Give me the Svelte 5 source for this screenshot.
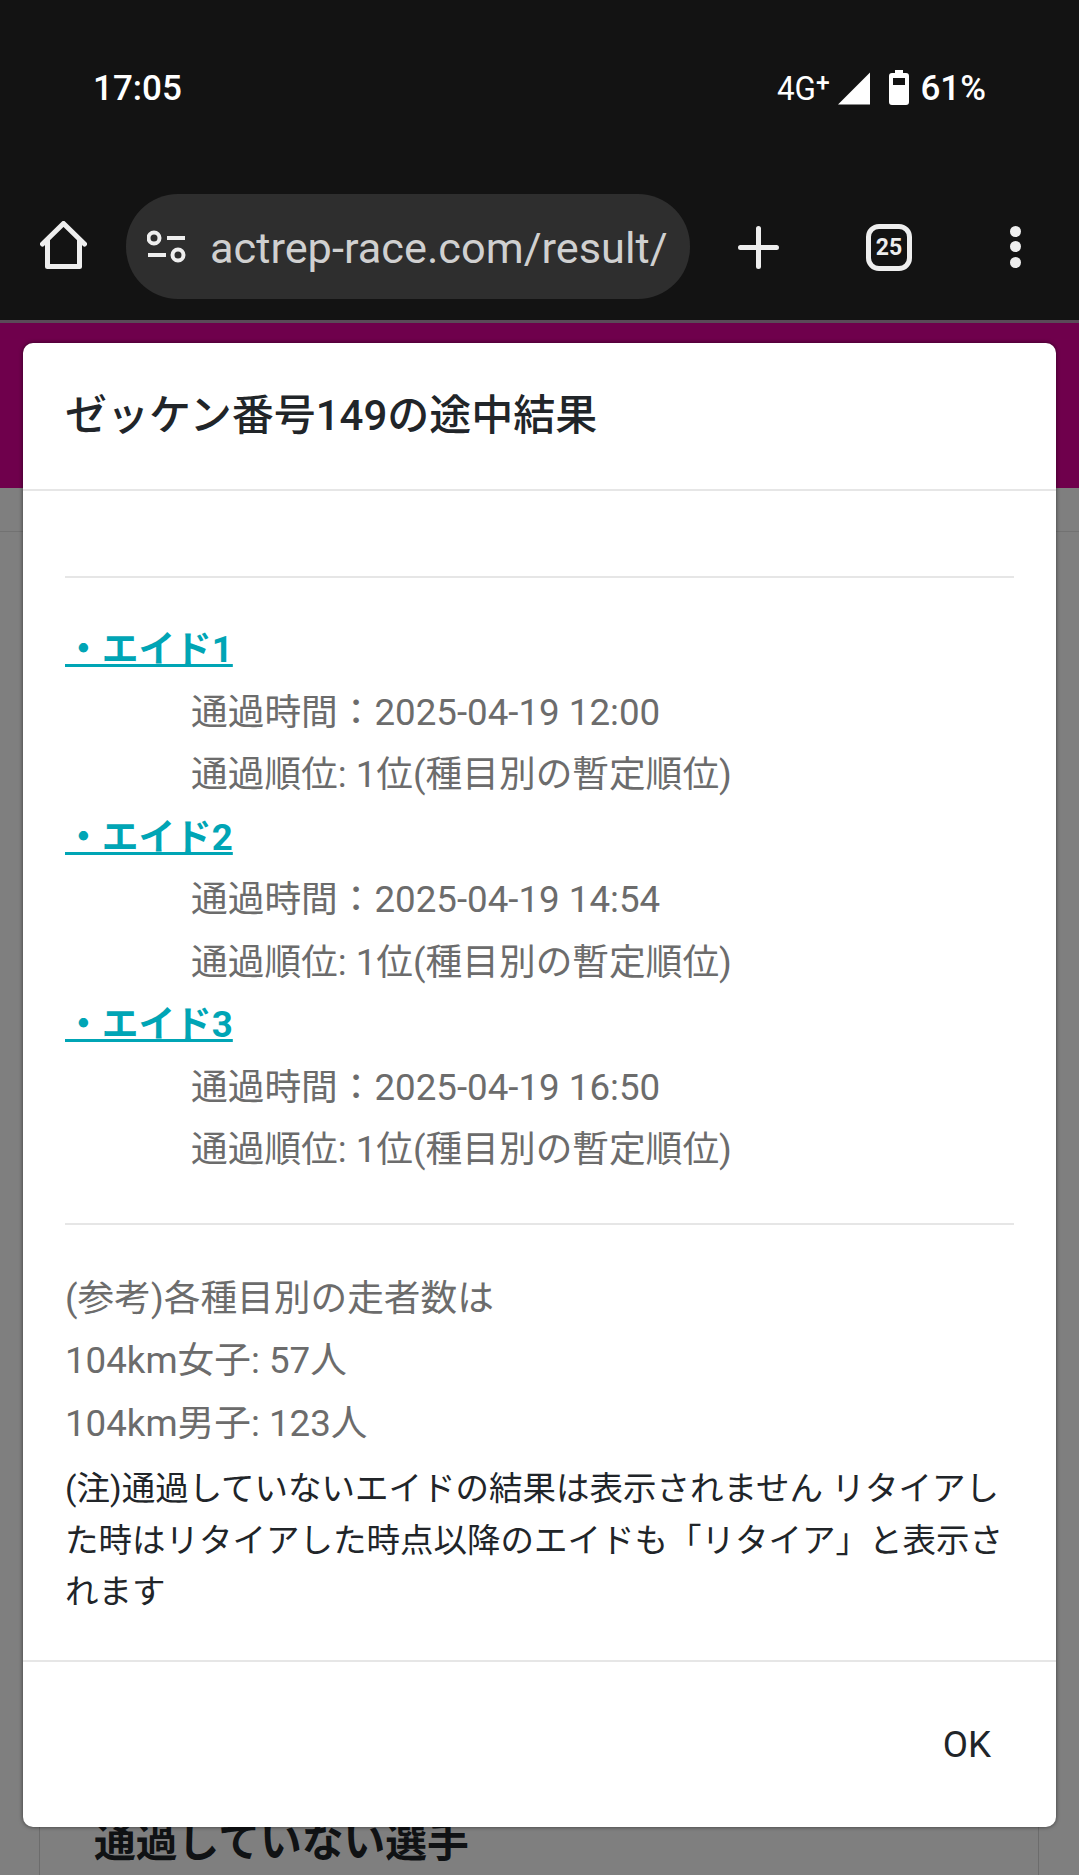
<script lang="ts">
	const aids = [
		{ name: '・エイド1', time: '2025-04-19 12:00' },
		{ name: '・エイド2', time: '2025-04-19 14:54' },
		{ name: '・エイド3', time: '2025-04-19 16:50' }
	];
	const runners = ['(参考)各種目別の走者数は', '104km女子: 57人', '104km男子: 123人'];
</script>

<div class="screen">
	<div class="chrome">
		<div class="status">
			<span class="clock">17:05</span>
			<div class="status-right">
				<span class="net">4G<sup>+</sup></span>
				<svg class="signal" width="34" height="33" viewBox="0 0 34 33"><path d="M33 0.5V32.5H1Z" fill="#fff" /></svg>
				<svg class="battery" width="20" height="35" viewBox="0 0 20 35">
					<path fill="#fff" fill-rule="evenodd" d="M6 0h8v3h3a3 3 0 0 1 3 3v26a3 3 0 0 1-3 3H3a3 3 0 0 1-3-3V6a3 3 0 0 1 3-3h3ZM4 8v7h12V8Z" />
				</svg>
				<span class="pct">61%</span>
			</div>
		</div>
		<div class="toolbar">
			<svg class="home" width="47" height="48" viewBox="0 0 47 48" fill="none" stroke="#eee" stroke-width="5" stroke-linejoin="round" stroke-linecap="round">
				<path d="M2.5 23 23.5 2.5 44.500 23" />
				<path d="M7.500 19V45.500H39.500V19" />
			</svg>
			<div class="pill">
				<svg class="tune" width="39" height="35" viewBox="0 0 39 35" fill="none" stroke="#eee" stroke-width="4">
					<circle cx="7" cy="9" r="5.500" />
					<path d="M20 9H38" />
					<path d="M1 26H19" />
					<circle cx="31" cy="26" r="5.500" />
				</svg>
				<span class="url">actrep-race.com/result/</span>
			</div>
			<svg class="plus" width="41" height="43" viewBox="0 0 41 43" stroke="#eee" stroke-width="5" stroke-linecap="round">
				<path d="M20.500 2.500V40.500M2.500 21.500H38.500" />
			</svg>
			<div class="tabs">25</div>
			<div class="dots"><i></i><i></i><i></i></div>
		</div>
	</div>

	<div class="page">
		<div class="site-head"></div>
		<div class="site-strip"></div>
		<div class="card">
			<h2>通過していない選手</h2>
		</div>

		<div class="overlay"></div>

		<div class="dialog">
			<header>ゼッケン番号149の途中結果</header>
			<div class="body">
				<hr />
				<div class="aids">
					{#each aids as aid (aid.name)}
						<a href="#top" class="aid-link">{aid.name}</a>
						<p class="detail">通過時間：{aid.time}</p>
						<p class="detail">通過順位: 1位(種目別の暫定順位)</p>
					{/each}
				</div>
				<hr />
				<div class="runners">
					{#each runners as line (line)}
						<p>{line}</p>
					{/each}
				</div>
				<p class="note">(注)通過していないエイドの結果は表示されません リタイアした時はリタイアした時点以降のエイドも「リタイア」と表示されます</p>
			</div>
			<footer><button>OK</button></footer>
		</div>
	</div>
</div>

<style>
	:global(body) {
		margin: 0;
		background: #fff;
	}

	.screen {
		width: 1079px;
		height: 1875px;
		overflow: hidden;
		display: flex;
		flex-direction: column;
		font-family: Roboto, 'Noto Sans CJK JP', sans-serif;
	}

	.chrome {
		background: #131313;
		height: 320px;
		flex: none;
		display: flex;
		flex-direction: column;
		color: #fff;
	}

	.status {
		height: 175px;
		padding: 71px 93px 0;
		box-sizing: border-box;
		display: flex;
		justify-content: space-between;
		align-items: flex-start;
	}

	.clock {
		font-size: 35px;
		line-height: 36px;
		font-weight: 500;
	}

	.status-right {
		display: flex;
		align-items: flex-start;
	}

	.net {
		font-size: 33px;
		line-height: 36px;
		transform: scaleX(0.95);
		transform-origin: left;
		width: 60px;
	}

	.net sup {
		font-size: 26px;
		line-height: 0;
		vertical-align: 9px;
		font-weight: 500;
	}

	.signal {
		margin-top: 1px;
	}

	.battery {
		margin-top: -1px;
		margin-left: 18px;
	}

	.pct {
		font-size: 35px;
		line-height: 36px;
		font-weight: 500;
		margin-left: 11px;
	}

	.toolbar {
		display: flex;
		align-items: center;
		padding-left: 40px;
		height: 105px;
		margin-top: 19px;
	}

	.home {
		flex: none;
		margin-top: -4px;
	}

	.pill {
		margin-left: 39px;
		width: 564px;
		height: 105px;
		flex: none;
		border-radius: 52px;
		background: #2e2e2e;
		display: flex;
		align-items: center;
		padding-left: 21px;
		box-sizing: border-box;
	}

	.tune {
		flex: none;
	}

	.url {
		margin-left: 24px;
		margin-top: 3px;
		font-size: 43.300px;
		color: #d0d0d0;
		white-space: nowrap;
	}

	.plus {
		flex: none;
		margin-left: 48px;
		margin-top: 1px;
	}

	.tabs {
		flex: none;
		margin-left: 87px;
		margin-top: 1px;
		width: 46px;
		height: 47px;
		box-sizing: border-box;
		border: 5px solid #eee;
		border-radius: 13px;
		color: #eee;
		font-size: 23px;
		font-weight: 700;
		display: flex;
		align-items: center;
		justify-content: center;
	}

	.dots {
		flex: none;
		margin-left: 98px;
		display: flex;
		flex-direction: column;
		gap: 4.500px;
	}

	.dots i {
		display: block;
		width: 11px;
		height: 11px;
		border-radius: 50%;
		background: #eee;
	}

	.page {
		position: relative;
		flex: 1;
		background: #fff;
		border-top: 3px solid #5a4a58;
	}

	.site-head {
		height: 165px;
		background: #de0098;
	}

	.site-strip {
		height: 43px;
		border-bottom: 1px solid #e4e4e4;
	}

	.card {
		margin: 1286px 0 0 39px;
		width: 1000px;
		height: 110px;
		border-left: 1px solid #d8d8d8;
		border-right: 1px solid #d8d8d8;
		box-sizing: border-box;
		padding-left: 54px;
	}

	h2 {
		margin: 0;
		font-size: 41.800px;
		line-height: 50px;
		font-weight: 700;
		color: #212529;
	}

	.overlay {
		position: absolute;
		inset: 0;
		background: rgba(0, 0, 0, 0.5);
	}

	.dialog {
		position: absolute;
		left: 23px;
		top: 20px;
		width: 1033px;
		height: 1484px;
		background: #fff;
		border-radius: 10px;
		box-shadow: 0 0 4px rgba(0, 0, 0, 0.55);
		display: flex;
		flex-direction: column;
	}

	header {
		height: 148px;
		flex: none;
		box-sizing: border-box;
		padding: 0 42px 10px;
		display: flex;
		align-items: center;
		border-bottom: 2px solid #e6e6e6;
		font-size: 42px;
		font-weight: 500;
		color: #212529;
	}

	.body {
		flex: 1;
		padding: 85px 42px 0;
	}

	hr {
		margin: 0;
		border: 0;
		border-top: 2px solid #e6e6e6;
	}

	.aids {
		padding: 41px 0 41px;
	}

	.aid-link {
		display: block;
		width: fit-content;
		font-size: 36.700px;
		line-height: 62.500px;
		font-weight: 700;
		color: #00a5b5;
	}

	.detail {
		margin: 0 0 0 126px;
		font-size: 36.700px;
		line-height: 62.500px;
		color: #6c6c6c;
	}

	.runners {
		padding-top: 43px;
		font-size: 36.700px;
		line-height: 62.500px;
		color: #6c6c6c;
	}

	.runners p {
		margin: 0;
	}

	.note {
		margin: 8px 0 0;
		font-size: 33.500px;
		line-height: 51.500px;
		color: #212529;
	}

	footer {
		height: 167px;
		flex: none;
		box-sizing: border-box;
		border-top: 2px solid #e6e6e6;
		display: flex;
		align-items: center;
		justify-content: flex-end;
		padding-right: 65px;
	}

	button {
		border: 0;
		background: none;
		padding: 0;
		font-family: inherit;
		font-size: 36.700px;
		color: #212529;
	}
</style>
